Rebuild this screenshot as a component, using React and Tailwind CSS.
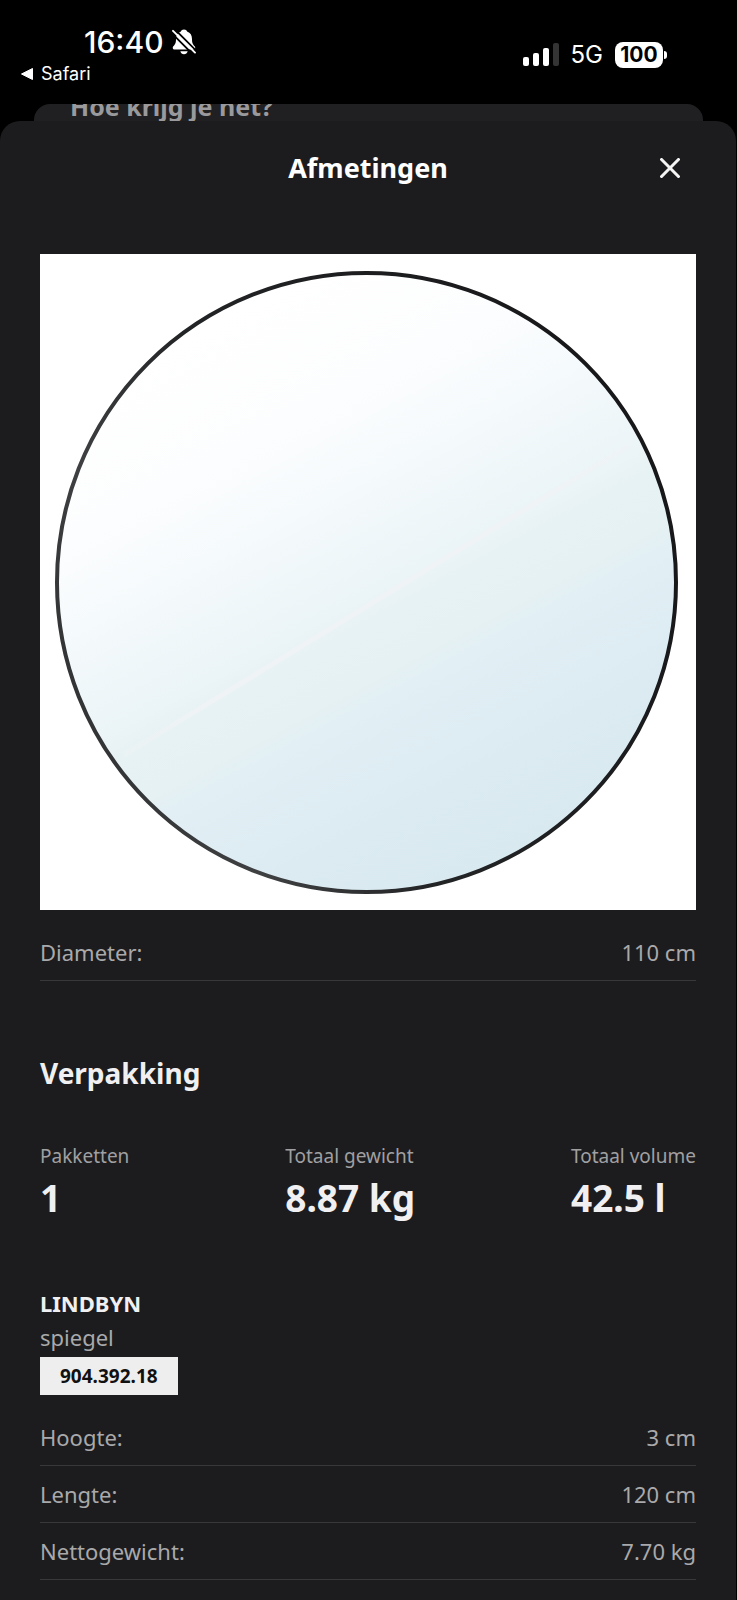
const totals = [
  { label: 'Pakketten', value: '1' },
  { label: 'Totaal gewicht', value: '8.87 kg' },
  { label: 'Totaal volume', value: '42.5 l' },
];

const packageMeasurements = [
  { label: 'Hoogte', value: '3 cm' },
  { label: 'Lengte', value: '120 cm' },
  { label: 'Nettogewicht', value: '7.70 kg' },
];

function BellOffIcon() {
  return (
    <svg className="w-6 h-[26px]" viewBox="0 0 24 26" fill="none" aria-hidden="true">
      <path
        d="M12 0.5c-1.600 0-2.800 0.900-3.100 2C5.500 3.600 4 6.400 4 10c0 4.200-1 5.600-2.700 7.300C0.300 18.600 0.600 20.500 2.400 20.500h19.200c1.800 0 2.100-1.900 1.100-3.200C21 15.600 20 14.200 20 10c0-3.600-1.500-6.400-4.900-7.500-0.300-1.100-1.500-2-3.100-2z"
        fill="#fff"
      />
      <path d="M8.300 22.300h7.400c-0.500 1.900-1.900 2.900-3.700 2.900s-3.200-1-3.700-2.900z" fill="#fff" />
      <path d="M-1 3.500 22 26.500M2.500 0 26 23.500" stroke="#000" strokeWidth="1.800" />
      <path d="M1 1.800 23 23.600" stroke="#fff" strokeWidth="1.900" strokeLinecap="round" />
    </svg>
  );
}

function SignalIcon() {
  return (
    <svg className="w-9 h-6" viewBox="0 0 36 24" aria-hidden="true">
      <rect x="0" y="14" width="6" height="9" rx="2" fill="#fff" />
      <rect x="10" y="10" width="6" height="13" rx="2" fill="#fff" />
      <rect x="20" y="5" width="6" height="18" rx="2" fill="#fff" />
      <rect x="30" y="0" width="6" height="23" rx="2" fill="#343434" />
    </svg>
  );
}

function StatusBar() {
  return (
    <div className="flex justify-between h-26 pl-[21px] pr-[70px] font-['Inter',sans-serif] text-white">
      <div className="pt-6">
        <div className="flex items-center gap-2 pl-[63px]">
          <span className="text-[30px] leading-9 font-medium">16:40</span>
          <BellOffIcon />
        </div>
        <a href="#safari" className="flex items-center gap-2 text-lg leading-7">
          <svg className="w-3 h-3" viewBox="0 0 12 12" aria-hidden="true">
            <path d="M11.500 0.500v11L0.500 6z" fill="#fff" stroke="#fff" strokeLinejoin="round" />
          </svg>
          Safari
        </a>
      </div>

      <div className="flex items-center h-[110px]">
        <SignalIcon />
        <span className="ml-3 text-2xl leading-7">5G</span>
        <div className="flex items-center ml-3">
          <span className="flex items-center justify-center w-12 h-[26px] rounded-lg bg-white text-[21px] leading-6 font-bold text-black">
            100
          </span>
          <span className="w-[3px] h-2 ml-px rounded-r-full bg-white" />
        </div>
      </div>
    </div>
  );
}

function MirrorImage() {
  return (
    <svg className="block w-full bg-white" viewBox="0 0 656 656" role="img" aria-label="LINDBYN spiegel">
      <defs>
        <linearGradient id="glass" gradientUnits="userSpaceOnUse" x1="180" y1="54" x2="473" y2="603">
          <stop offset="0" stopColor="#ffffff" />
          <stop offset="0.220" stopColor="#fcfdfe" />
          <stop offset="0.350" stopColor="#f5fafc" />
          <stop offset="0.520" stopColor="#ebf4f7" />
          <stop offset="0.560" stopColor="#e7f2f4" />
          <stop offset="0.640" stopColor="#e5f1f2" />
          <stop offset="0.680" stopColor="#e2eff5" />
          <stop offset="0.850" stopColor="#dcebf2" />
          <stop offset="1" stopColor="#d9e9f0" />
        </linearGradient>
        <linearGradient id="frame" x1="0.900" y1="0.200" x2="0" y2="0.600">
          <stop offset="0" stopColor="#18181a" />
          <stop offset="0.600" stopColor="#232426" />
          <stop offset="0.850" stopColor="#3e4042" />
          <stop offset="1" stopColor="#323436" />
        </linearGradient>
        <linearGradient id="streak" gradientUnits="userSpaceOnUse" x1="84" y1="501" x2="590" y2="191">
          <stop offset="0" stopColor="#f0f3f5" stopOpacity="0.400" />
          <stop offset="0.200" stopColor="#f0f3f5" />
          <stop offset="0.800" stopColor="#f0f3f5" />
          <stop offset="1" stopColor="#f0f3f5" stopOpacity="0.400" />
        </linearGradient>
      </defs>
      <circle cx="326.500" cy="328.500" r="309.500" fill="url(#glass)" />
      <path d="M84 501 590 191" stroke="url(#streak)" strokeWidth="5" />
      <circle cx="326.500" cy="328.500" r="309.500" fill="none" stroke="url(#frame)" strokeWidth="4" />
    </svg>
  );
}

function MeasurementRow({ label, value }) {
  return (
    <div className="flex items-center justify-between h-[57px] border-b border-[#38383a] text-[22px] leading-8 text-[#a9a9ab]">
      <dt>{label}:</dt>
      <dd>{value}</dd>
    </div>
  );
}

export default function App() {
  return (
    <div className="flex flex-col min-h-screen bg-black font-['Noto_Sans',sans-serif]">
      <StatusBar />

      {/* Sheet that stays visible behind the open one */}
      <div className="h-[17px] mx-[34px] px-9 overflow-hidden rounded-t-2xl bg-[#202022]">
        <p className="-mt-3.5 text-[25px] leading-8 font-bold text-[#9a9a9c]">Hoe krijg je het?</p>
      </div>

      <section className="flex-1 mr-px rounded-t-[20px] bg-[#1c1c1e]">
        <header className="grid grid-cols-[1fr_auto_1fr] items-center h-[93px] px-10">
          <h1 className="col-start-2 text-[27px] leading-9 font-bold text-white">Afmetingen</h1>
          <button type="button" aria-label="Sluiten" className="justify-self-end p-4 text-[#f5f5f5]">
            <svg className="w-5 h-5" viewBox="0 0 20 20" fill="none" aria-hidden="true">
              <path d="M0.500 0.500 19.500 19.500M19.500 0.500 0.500 19.500" stroke="currentColor" strokeWidth="3" />
            </svg>
          </button>
        </header>

        <div className="px-10 pt-10 pb-5">
          <MirrorImage />

          <dl className="mt-[14px]">
            <MeasurementRow label="Diameter" value="110 cm" />
          </dl>

          <h2 className="mt-18 text-[28px] leading-10 font-bold text-[#f0f0f2]">Verpakking</h2>

          <dl className="flex justify-between mt-[49px]">
            {totals.map((item) => (
              <div key={item.label}>
                <dt className="text-[19px] leading-7 text-[#a0a0a2]">{item.label}</dt>
                <dd className="mt-1 text-[37px] leading-12 font-bold text-[#f0f0f2]">{item.value}</dd>
              </div>
            ))}
          </dl>

          {/* Package */}
          <h3 className="mt-16 text-[22px] leading-[34px] font-bold text-[#f0f0f2]">LINDBYN</h3>
          <p className="text-[22px] leading-[34px] text-[#a9a9ab]">spiegel</p>
          <span className="inline-block mt-[3px] px-5 py-[5px] bg-[#eeeeee] text-[19px] leading-7 font-bold text-[#111111] align-top">
            904.392.18
          </span>

          <dl className="mt-[14px]">
            {packageMeasurements.map((item) => (
              <MeasurementRow key={item.label} label={item.label} value={item.value} />
            ))}
          </dl>
        </div>
      </section>
    </div>
  );
}
